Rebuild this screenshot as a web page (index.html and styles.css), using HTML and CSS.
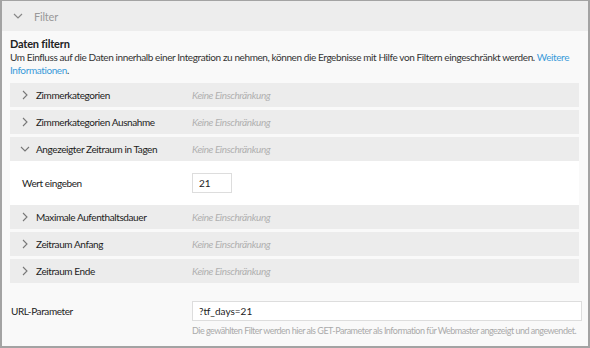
FILE: index.html
```html
<!DOCTYPE html>
<html lang="de">
<head>
  <meta charset="UTF-8" />
  <title>Filter</title>
  <link rel="stylesheet" href="styles.css">
</head>
<body>
  <div class="panel">
    <div class="panel-head">
      <svg class="chev" width="10" height="6" viewBox="0 0 10 6"><path d="M1 1l4 4 4-4" fill="none" stroke="#888" stroke-width="1.2"/></svg>
      <span>Filter</span>
    </div>

    <div class="panel-body">
      <h3>Daten filtern</h3>
      <p class="intro">Um Einfluss auf die Daten innerhalb einer Integration zu nehmen, können die Ergebnisse mit Hilfe von Filtern eingeschränkt werden. <a href="#">Weitere Informationen</a>.</p>

      <div class="filters">
        <div class="filter">
          <svg class="chev" width="6" height="10" viewBox="0 0 6 10"><path d="M1 1l4 4-4 4" fill="none" stroke="#777" stroke-width="1.1"/></svg>
          <span class="name">Zimmerkategorien</span>
          <span class="value">Keine Einschränkung</span>
        </div>
        <div class="filter">
          <svg class="chev" width="6" height="10" viewBox="0 0 6 10"><path d="M1 1l4 4-4 4" fill="none" stroke="#777" stroke-width="1.1"/></svg>
          <span class="name">Zimmerkategorien Ausnahme</span>
          <span class="value">Keine Einschränkung</span>
        </div>
        <div class="filter open">
          <svg class="chev" width="10" height="6" viewBox="0 0 10 6"><path d="M1 1l4 4 4-4" fill="none" stroke="#777" stroke-width="1.1"/></svg>
          <span class="name">Angezeigter Zeitraum in Tagen</span>
          <span class="value">Keine Einschränkung</span>
        </div>
        <div class="filter-detail">
          <span class="label">Wert eingeben</span>
          <input class="num" type="text" value="21" />
        </div>
        <div class="filter">
          <svg class="chev" width="6" height="10" viewBox="0 0 6 10"><path d="M1 1l4 4-4 4" fill="none" stroke="#777" stroke-width="1.1"/></svg>
          <span class="name">Maximale Aufenthaltsdauer</span>
          <span class="value">Keine Einschränkung</span>
        </div>
        <div class="filter">
          <svg class="chev" width="6" height="10" viewBox="0 0 6 10"><path d="M1 1l4 4-4 4" fill="none" stroke="#777" stroke-width="1.1"/></svg>
          <span class="name">Zeitraum Anfang</span>
          <span class="value">Keine Einschränkung</span>
        </div>
        <div class="filter">
          <svg class="chev" width="6" height="10" viewBox="0 0 6 10"><path d="M1 1l4 4-4 4" fill="none" stroke="#777" stroke-width="1.1"/></svg>
          <span class="name">Zeitraum Ende</span>
          <span class="value">Keine Einschränkung</span>
        </div>
      </div>

      <div class="url-row">
        <span class="label">URL-Parameter</span>
        <div class="url-field">
          <input class="url" type="text" value="?tf_days=21" />
          <p class="hint">Die gewählten Filter werden hier als GET-Parameter als Information für Webmaster angezeigt und angewendet.</p>
        </div>
      </div>
    </div>
  </div>
</body>
</html>
```

FILE: styles.css
```css
* {
  margin: 0;
  padding: 0;
  box-sizing: border-box;
  font-family: 'Lato', sans-serif;
}
body {
  background: #fff;
  color: #222;
  font-size: 10px;
  letter-spacing: -0.4px;
}
.panel {
  width: 590px;
  height: 348px;
  border: 2px solid #a3a3a3;
  border-top-width: 1px;
  background: #f9f9f9;
}
.panel-head {
  height: 30px;
  background: #ededed;
  display: flex;
  align-items: center;
  padding-left: 11px;
  color: #999;
  font-size: 11px;
  letter-spacing: -0.2px;
}
.panel-head .chev {
  margin-right: 11px;
}
.panel-body {
  padding: 6px 8px 0 8px;
}
h3 {
  font-size: 11px;
  font-weight: bold;
  color: #222;
  line-height: 14px;
  letter-spacing: -0.2px;
}
.intro {
  line-height: 13px;
  color: #333;
}
.intro a {
  color: #3a9bd9;
  text-decoration: none;
}
.filters {
  margin-top: 6px;
  width: 569px;
  display: flex;
  flex-direction: column;
  gap: 3px;
}
.filter {
  height: 24px;
  background: #ececec;
  display: flex;
  align-items: center;
  padding-left: 10px;
}
.filter .chev {
  width: 10px;
  margin-right: 6px;
}
.filter .name {
  width: 156px;
  color: #222;
}
.filter .value {
  color: #b0b0b0;
  font-style: italic;
}
.filter-detail {
  height: 44px;
  margin: -3px 0;
  background: #fff;
  display: flex;
  align-items: center;
  padding-left: 12px;
}
.filter-detail .label {
  width: 170px;
}
.num {
  width: 40px;
  height: 20px;
  border: 1px solid #ddd;
  padding-left: 6px;
  font-size: 10px;
  color: #222;
  background: #fff;
}
.url-row {
  display: flex;
  margin-top: 18px;
  width: 572px;
}
.url-row .label {
  width: 182px;
  padding-left: 1px;
  line-height: 20px;
}
.url-field {
  flex: 1;
}
.url {
  width: 100%;
  height: 20px;
  border: 1px solid #ddd;
  padding-left: 6px;
  font-size: 10px;
  color: #222;
  background: #fff;
}
.hint {
  margin-top: 3px;
  color: #aaa;
  font-size: 9px;
  line-height: 13px;
  letter-spacing: -0.5px;
  white-space: nowrap;
}
```
